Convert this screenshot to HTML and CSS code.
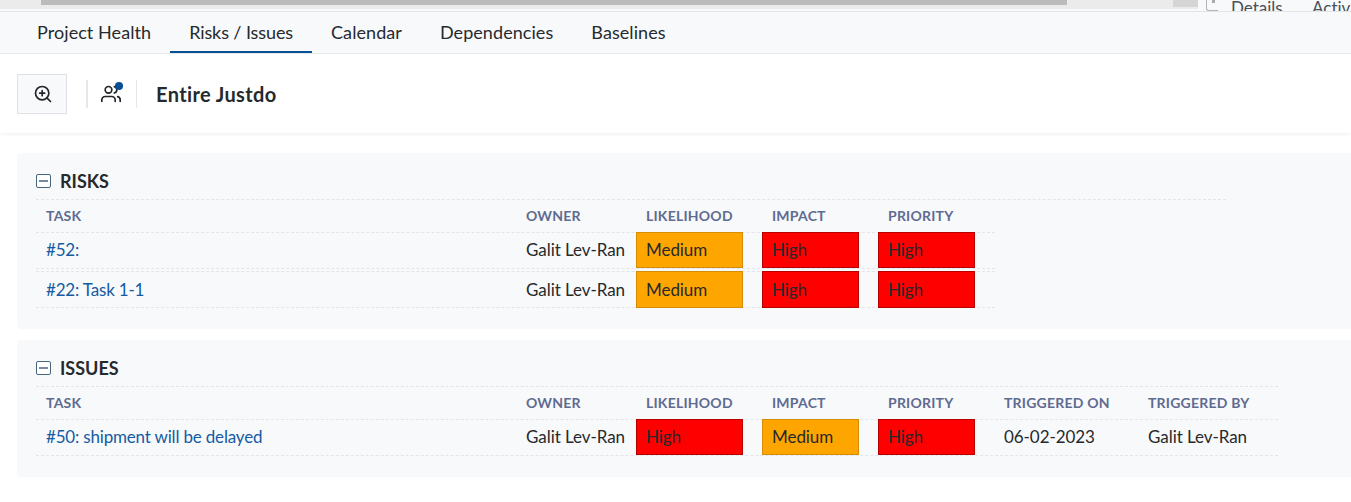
FILE: index.html
```
<!DOCTYPE html>
<html lang="en">
<head>
<meta charset="utf-8">
<title>Risks / Issues</title>
<link rel="stylesheet" href="styles.css">
</head>
<body>
<header class="upper">
  <div class="scroll-area"><div class="scroll-thumb"></div><div class="scroll-corner"></div></div>
  <div class="side-tabs"><span class="side-icon"></span><span class="side-tab">Details</span><span class="side-tab">Activ</span></div>
</header>
<nav class="tabs">
  <a class="tab">Project Health</a>
  <a class="tab active">Risks / Issues</a>
  <a class="tab">Calendar</a>
  <a class="tab">Dependencies</a>
  <a class="tab">Baselines</a>
</nav>
<div class="toolbar">
  <button class="zoom-btn" aria-label="Zoom">
    <svg width="20" height="20" viewBox="0 0 24 24" fill="none" stroke="#212529" stroke-width="2" stroke-linecap="round" stroke-linejoin="round"><circle cx="11" cy="11" r="8"/><path d="M21 21l-4.35-4.35M11 8v6M8 11h6"/></svg>
  </button>
  <div class="members">
    <svg width="20" height="20" viewBox="0 0 24 24" fill="none" stroke="#212529" stroke-width="2" stroke-linecap="round" stroke-linejoin="round"><path d="M17 21v-2a4 4 0 0 0-4-4H5a4 4 0 0 0-4 4v2"/><circle cx="9" cy="7" r="4"/><path d="M23 21v-2a4 4 0 0 0-3-3.87M16 3.13a4 4 0 0 1 0 7.75"/></svg>
    <span class="dot"></span>
  </div>
  <h1 class="title">Entire Justdo</h1>
</div>
<main class="content">
  <section class="panel risks">
    <h2 class="heading"><svg class="toggle" width="15" height="14" viewBox="0 0 15 14" fill="#fff" stroke="#48657f"><rect x=".5" y=".5" width="14" height="13" rx="1.5"/><path d="M3 7h9" stroke-width="1.5"/></svg><span>RISKS</span></h2>
    <div class="head-line"></div>
    <div class="row head"><span>TASK</span><span>OWNER</span><span>LIKELIHOOD</span><span>IMPACT</span><span>PRIORITY</span></div>
    <div class="row"><a>#52:</a><span>Galit Lev-Ran</span><span class="level medium">Medium</span><span class="level high">High</span><span class="level high">High</span></div>
    <div class="row second"><a>#22: Task 1-1</a><span>Galit Lev-Ran</span><span class="level medium">Medium</span><span class="level high">High</span><span class="level high">High</span></div>
  </section>
  <section class="panel issues">
    <h2 class="heading"><svg class="toggle" width="15" height="14" viewBox="0 0 15 14" fill="#fff" stroke="#48657f"><rect x=".5" y=".5" width="14" height="13" rx="1.5"/><path d="M3 7h9" stroke-width="1.5"/></svg><span>ISSUES</span></h2>
    <div class="head-line"></div>
    <div class="row head"><span>TASK</span><span>OWNER</span><span>LIKELIHOOD</span><span>IMPACT</span><span>PRIORITY</span><span>TRIGGERED ON</span><span>TRIGGERED BY</span></div>
    <div class="row"><a>#50: shipment will be delayed</a><span>Galit Lev-Ran</span><span class="level high">High</span><span class="level medium">Medium</span><span class="level high">High</span><span>06-02-2023</span><span>Galit Lev-Ran</span></div>
  </section>
</main>
</body>
</html>
```
FILE: styles.css
```
* { box-sizing: border-box; }
body { margin: 0; background: #fff; color: #26292d; font: 18px/24px Lato, sans-serif; overflow: hidden; height: 502px; font-variant-ligatures: none; }
.upper { height: 11px; display: flex; background: #f8f9fb; }
.scroll-area { flex: none; width: 1198px; height: 9px; padding-left: 41px; display: flex; justify-content: space-between; background: #ebebec; }
.scroll-thumb { width: 1026px; height: 5px; background: #bbbbbc; }
.scroll-corner { width: 25px; height: 7px; background: #d5d5d6; }
.side-tabs { flex: none; height: 11px; display: flex; padding-left: 8px; font-size: 17px; line-height: 20px; color: #495057; white-space: nowrap; }
.side-icon { width: 12px; height: 11px; margin-right: 13px; border-left: 1px solid #adb5bd; border-bottom: 1px solid #adb5bd; border-bottom-left-radius: 3px; background: linear-gradient(#aaa, #aaa) 5px 0 / 3px 3px no-repeat; }
.side-tab { width: 81px; margin-top: -2px; }
.side-tab:last-child { width: 39px; }
.tabs { position: relative; height: 43px; display: flex; background: #f8f9fb; border-top: 1px solid #e3e4e6; border-bottom: 1px solid #e9ebed; padding-left: 17px; }
.tab { height: 41px; padding: 8px 19px 0; border-bottom: 2px solid transparent; white-space: nowrap; letter-spacing: .07px; }
.tab:first-child { padding-left: 20px; padding-right: 19px; }
.tab.active { border-bottom-color: #084e95; letter-spacing: -.1px; }
.toolbar { height: 79px; display: flex; align-items: center; padding-left: 17px; box-shadow: 0 1px 4px rgba(0,0,0,.07); }
.zoom-btn { width: 50px; height: 40px; padding: 0 0 0 1px; border: 1px solid #dee2e6; background: #f8f9fa; display: grid; place-items: center; }
.members { position: relative; height: 28px; width: 51px; margin-left: 19px; border-left: 2px solid #e4e7eb; border-right: 1px solid #e4e7eb; padding: 4px 0 0 13px; }
.dot { position: absolute; left: 27px; top: 2px; width: 8px; height: 8px; border-radius: 50%; background: #084e95; }
.title { margin: 0 0 0 19px; font-size: 20px; line-height: 28px; font-weight: 700; letter-spacing: .38px; }
.content { padding: 20px 0 0 17px; display: flex; flex-direction: column; gap: 11px; }
.panel { background: #f8f9fb; padding: 13px 0 0 19px; border-radius: 4px 0 0 4px; }
.risks { height: 176px; }
.issues { height: 137px; }
.heading { height: 33px; margin: 0; display: flex; align-items: center; gap: 9px; font-size: 18px; line-height: 30px; padding-bottom: 3px; }
.head-line { width: 1190px; border-top: 1px dashed #e2e5e9; }
.row { display: grid; width: 959px; grid-template-columns: 480px 120px 126px 116px 116px 144px 139px; height: 36px; border-bottom: 1px dashed #e2e5e9; font-size: 17px; line-height: 34px; letter-spacing: -.06px; white-space: nowrap; }
.row > * { padding-left: 10px; }
.row a { color: #145ba3; letter-spacing: -.18px; }
.issues .row, .issues .head-line { width: 1242px; }
.row.head { height: 33px; color: #5f6b91; font-size: 14px; line-height: 32px; font-weight: 700; letter-spacing: .22px; }
.row.second { border-top: 1px dashed #e2e5e9; margin-top: 2px; height: 37px; line-height: 35px; }
.level { height: 36px; margin: -1px 19px 0 0; border: 1px solid #c90000; line-height: 34px; }
.row > .level { padding-left: 9px; }
.second .level { height: 37px; line-height: 35px; }
.medium { background: #ffa500; border-color: #d68c05; }
.high { background: #f00; border-color: #b80000; }
```
